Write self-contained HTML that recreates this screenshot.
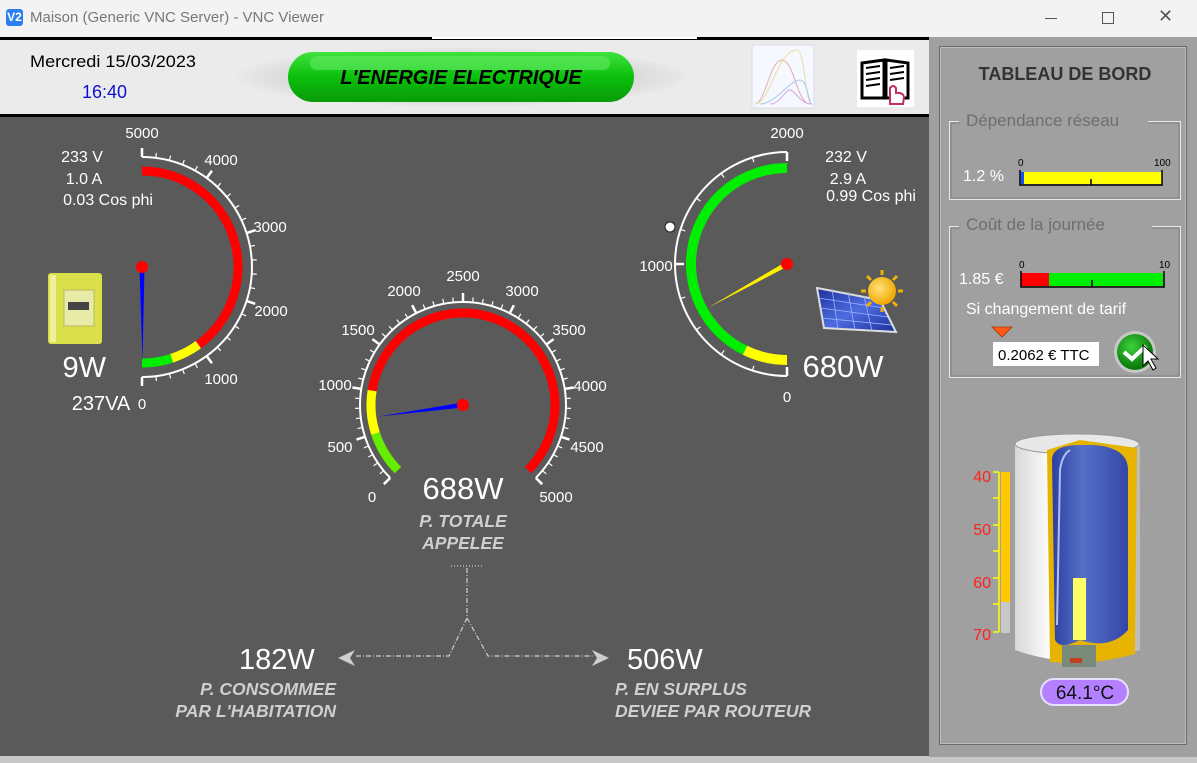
<!DOCTYPE html>
<html><head><meta charset="utf-8"><style>
html,body{margin:0;padding:0;width:1197px;height:763px;overflow:hidden;background:#f3f3f3;font-family:"Liberation Sans",sans-serif}
.a{position:absolute}
</style></head><body>
<div class="a" style="left:0;top:0;width:1197px;height:37px;background:#f3f3f3"></div>
<div class="a" style="left:6px;top:9px;width:17px;height:17px;background:#2d7ff0;border-radius:3px;color:#fff;font-size:12px;line-height:17px;text-align:center;font-weight:bold">V2</div>
<div class="a" style="left:30px;top:9px;font-size:15px;color:#777">Maison (Generic VNC Server) - VNC Viewer</div>
<div class="a" style="left:1045px;top:18px;width:12px;height:1px;background:#555"></div>
<div class="a" style="left:1102px;top:12px;width:10px;height:10px;border:1px solid #555"></div>
<div class="a" style="left:1158px;top:6px;font-size:18px;color:#555">✕</div>

<svg class="a" style="left:0;top:0" width="1197" height="763" xmlns="http://www.w3.org/2000/svg" font-family="Liberation Sans, sans-serif">
<defs>
<linearGradient id="gp" x1="0" y1="0" x2="0" y2="1"><stop offset="0" stop-color="#3ee23e"/><stop offset="0.5" stop-color="#0cc00c"/><stop offset="1" stop-color="#089a08"/></linearGradient>
<radialGradient id="gh" cx="0.5" cy="0.5" r="0.5"><stop offset="0.6" stop-color="#cfcfcf"/><stop offset="1" stop-color="#e9e9e9"/></radialGradient>
<linearGradient id="cyl" x1="0" y1="0" x2="1" y2="0"><stop offset="0" stop-color="#d8d8d8"/><stop offset="0.3" stop-color="#ffffff"/><stop offset="1" stop-color="#bcbcbc"/></linearGradient>
<linearGradient id="tank" x1="0" y1="0" x2="1" y2="0"><stop offset="0" stop-color="#2c3fa0"/><stop offset="0.4" stop-color="#5670c8"/><stop offset="1" stop-color="#3346a8"/></linearGradient>
<radialGradient id="btn" cx="0.4" cy="0.35" r="0.6"><stop offset="0" stop-color="#3ed23e"/><stop offset="1" stop-color="#0a7a0a"/></radialGradient>
<radialGradient id="sun" cx="0.4" cy="0.4" r="0.6"><stop offset="0" stop-color="#ffe27a"/><stop offset="1" stop-color="#f0a800"/></radialGradient>
<linearGradient id="pan" x1="0" y1="0" x2="1" y2="1"><stop offset="0" stop-color="#1c2f9a"/><stop offset="0.5" stop-color="#4d6ce0"/><stop offset="1" stop-color="#1c2f9a"/></linearGradient>
</defs>
<rect x="0" y="37" width="930" height="721" fill="#5a5a5a"/>
<rect x="0" y="38" width="930" height="78" fill="#ebebeb"/>
<rect x="0" y="37" width="930" height="3" fill="#000"/>
<rect x="0" y="114" width="930" height="3" fill="#000"/>
<rect x="432" y="37" width="265" height="2" fill="#fff"/>
<rect x="0" y="756" width="1197" height="7" fill="#c8c8c8"/>
<rect x="929" y="37" width="268" height="720" fill="#a0a0a0"/>
<rect x="939.5" y="46.5" width="247" height="698" fill="none" stroke="#6a6a6a"/>
<rect x="940.5" y="47.5" width="245" height="696" fill="none" stroke="#c6c6c6" stroke-width="0.8"/>

<text x="30" y="67" font-size="17" fill="#000" textLength="166" lengthAdjust="spacingAndGlyphs">Mercredi 15/03/2023</text>
<text x="82" y="98" font-size="18" fill="#1010d0">16:40</text>
<ellipse cx="462" cy="77" rx="225" ry="30" fill="url(#gh)"/>
<rect x="288" y="52" width="346" height="50" rx="25" fill="url(#gp)"/>
<rect x="310" y="56" width="300" height="14" rx="7" fill="#6ef06e" opacity="0.5"/>
<text x="461" y="84" font-size="20" font-weight="bold" font-style="italic" text-anchor="middle" fill="#000">L'ENERGIE ELECTRIQUE</text>
<rect x="752" y="45" width="62" height="63" fill="#f6f8ff" stroke="#d8dce8"/>
<path d="M755 104 C765 104 770 60 782 60 C794 60 797 104 810 104" fill="none" stroke="#e7a9a9"/>
<path d="M755 104 C770 104 777 50 797 50 C805 50 805 104 812 104" fill="none" stroke="#e8e0a0"/>
<path d="M760 104 C775 104 790 80 800 80 C808 80 808 104 812 104" fill="none" stroke="#a8c8e8"/>
<path d="M770 104 C780 104 785 90 790 90 C795 90 800 104 812 104" fill="none" stroke="#d8a8e8"/>
<rect x="857" y="50" width="57" height="57" fill="#fff"/>
<path d="M862 63 L884 60 L884 98 L862 98 Z M886 60 L908 63 L908 98 L886 98 Z" fill="#fff" stroke="#000" stroke-width="3"/>
<path d="M866 68 L880 66 M866 74 L880 72 M866 80 L880 78 M866 86 L880 84 M890 68 L904 66 M890 74 L904 72 M890 80 L904 78" stroke="#000" stroke-width="2"/>
<path d="M890 104 L890 88 Q893 84 896 88 L896 93 Q903 92 904 97 L903 104 Z" fill="#fff" stroke="#c03060" stroke-width="2"/>

<g id="g1"></g><g id="g2"></g><g id="g3"></g>

<g fill="#fff" font-size="15" text-anchor="middle">
<text x="142" y="138">5000</text><text x="221" y="165">4000</text><text x="270" y="232">3000</text><text x="271" y="316">2000</text><text x="221" y="384">1000</text><text x="142" y="409">0</text>
<text x="82" y="162" font-size="16">233 V</text><text x="84" y="184" font-size="16">1.0 A</text><text x="108" y="205" font-size="16">0.03 Cos phi</text>
<text x="106" y="377" font-size="29" text-anchor="end">9W</text>
<text x="101" y="410" font-size="20">237VA</text>
</g>
<rect x="48" y="273" width="54" height="71" rx="3" fill="#d9e04a"/>
<rect x="50" y="275" width="6" height="67" fill="#eef0a0"/>
<rect x="64" y="290" width="30" height="36" fill="#e8eaa8" stroke="#b8bb60"/>
<rect x="68" y="302" width="21" height="8" fill="#444"/>

<g fill="#fff" font-size="15" text-anchor="middle">
<text x="372" y="502">0</text><text x="340" y="452">500</text><text x="335" y="390">1000</text><text x="358" y="335">1500</text><text x="404" y="296">2000</text><text x="463" y="281">2500</text><text x="522" y="296">3000</text><text x="569" y="335">3500</text><text x="590" y="391">4000</text><text x="587" y="452">4500</text><text x="556" y="502">5000</text>
<text x="463" y="499" font-size="31">688W</text>
</g>
<g fill="#cfcfcf" font-size="17.5" font-weight="bold" font-style="italic" text-anchor="middle">
<text x="463" y="527">P. TOTALE</text><text x="463" y="549">APPELEE</text>
</g>

<g fill="#fff" font-size="15" text-anchor="middle">
<text x="787" y="138">2000</text><text x="656" y="271">1000</text><text x="787" y="402">0</text>
<text x="846" y="162" font-size="16">232 V</text><text x="848" y="184" font-size="16">2.9 A</text><text x="871" y="201" font-size="16">0.99 Cos phi</text>
<text x="843" y="377" font-size="31">680W</text>
</g>
<circle cx="670" cy="227" r="5" fill="#fff" stroke="#222"/>
<polygon points="817,288 880,300 896,332 824,328" fill="url(#pan)" stroke="#ddd" stroke-width="2"/>
<path d="M818 298 L884 308 M820 308 L888 317 M821 318 L892 325 M832 289 L838 329 M848 292 L855 330 M864 296 L872 331" stroke="#9fb4ff" stroke-width="0.8"/>
<circle cx="882" cy="291" r="14" fill="url(#sun)"/>
<g stroke="#f0b000" stroke-width="3"><path d="M882 270v5M882 307v5M861 291h5M898 291h5M867 276l4 4M893 302l4 4M897 276l-4 4M867 306l4-4"/></g>

<g stroke="#cfcfcf" stroke-width="1.2" fill="none" stroke-dasharray="5,2,1,2">
<path d="M451 566 H484" stroke-dasharray="1,2"/>
<path d="M467 568 V618 L449 656 H355"/>
<path d="M467 618 L488 656 H594"/>
</g>
<polygon points="338,658 355,650 350,658 355,666" fill="#cfcfcf"/>
<polygon points="609,658 592,650 597,658 592,666" fill="#cfcfcf"/>
<g fill="#fff" font-size="29"><text x="239" y="669">182W</text><text x="627" y="669">506W</text></g>
<g fill="#cfcfcf" font-size="17.5" font-weight="bold" font-style="italic">
<text x="336" y="695" text-anchor="end">P. CONSOMMEE</text><text x="336" y="717" text-anchor="end">PAR L'HABITATION</text>
<text x="615" y="695">P. EN SURPLUS</text><text x="615" y="717">DEVIEE PAR ROUTEUR</text>
</g>

<text x="1065" y="80" font-size="18" font-weight="bold" fill="#333" text-anchor="middle">TABLEAU DE BORD</text>
<path d="M959 121.5 H949.5 V199.5 H1180.5 V121.5 H1148" fill="none" stroke="#e8e8e8"/>
<path d="M960 123 H951 V198 H1179 V123 H1148" fill="none" stroke="#7a7a7a" stroke-width="0.8"/>
<text x="966" y="126" font-size="17" fill="#6e6e6e">Dépendance réseau</text>
<text x="963" y="181" font-size="16" fill="#fff">1.2 %</text>
<text x="1018" y="166" font-size="10" fill="#000">0</text><text x="1154" y="166" font-size="10" fill="#000">100</text>
<rect x="1021" y="172" width="141" height="12" fill="#ffff00"/>
<rect x="1021" y="172" width="3" height="12" fill="#1050ff"/>
<path d="M1020 170 V185 H1162 V170 M1091 185 V179" fill="none" stroke="#000" stroke-width="1.5"/>

<path d="M959 226.5 H949.5 V377.5 H1180.5 V226.5 H1152" fill="none" stroke="#e8e8e8"/>
<path d="M960 228 H951 V376 H1179 V228 H1152" fill="none" stroke="#7a7a7a" stroke-width="0.8"/>
<text x="966" y="230" font-size="17" fill="#6e6e6e">Coût de la journée</text>
<text x="959" y="284" font-size="16" fill="#fff">1.85 €</text>
<text x="1019" y="268" font-size="10" fill="#000">0</text><text x="1159" y="268" font-size="10" fill="#000">10</text>
<rect x="1021" y="273" width="28" height="13" fill="#ff0000"/>
<rect x="1049" y="273" width="114" height="13" fill="#00ee00"/>
<path d="M1021 271 V287 H1164 V271 M1092 287 V280" fill="none" stroke="#000" stroke-width="1.5"/>
<text x="966" y="314" font-size="16" fill="#fff">Si changement de tarif</text>
<polygon points="992,327 1012,327 1002,337" fill="#ff5a1a" stroke="#aa3300" stroke-width="0.8"/>
<rect x="993" y="342" width="106" height="24" fill="#fff"/>
<text x="998" y="360" font-size="15" fill="#000">0.2062 € TTC</text>
<circle cx="1135" cy="352" r="21" fill="#c8c8c8"/>
<circle cx="1135" cy="352" r="18" fill="url(#btn)"/>
<path d="M1124 352 L1132 359 L1146 346" fill="none" stroke="#fff" stroke-width="4"/>
<path d="M1143 345 L1143 366 L1148 361 L1153 370 L1156 368 L1151 359 L1158 359 Z" fill="#fff" stroke="#000"/>

<path d="M1015 445 Q1077 425 1140 445 V650 Q1077 672 1015 650 Z" fill="url(#cyl)"/>
<ellipse cx="1077" cy="444" rx="62" ry="10" fill="#e8e8e8" stroke="#999"/>
<path d="M1047 450 L1080 440 L1137 448 L1135 654 Q1090 666 1050 662 Z" fill="#e6b400"/>
<path d="M1052 460 Q1052 445 1080 445 L1095 445 Q1128 448 1128 470 L1128 630 Q1110 650 1080 640 Q1060 650 1055 640 Z" fill="url(#tank)"/>
<path d="M1060 470 Q1062 455 1070 450 M1060 470 L1057 625" stroke="#b0c0f0" stroke-width="2" fill="none"/>
<rect x="1073" y="578" width="13" height="62" fill="#ffff66"/>
<rect x="1062" y="645" width="34" height="22" fill="#7a8a7a"/>
<rect x="1070" y="658" width="12" height="5" fill="#c04020"/>
<rect x="1001" y="472" width="9" height="130" fill="#ffc800"/>
<rect x="1001" y="602" width="9" height="31" fill="#c8c8c8"/>
<path d="M999 472 V632 M993 472 H999 M993 498 H999 M993 525 H999 M993 551 H999 M993 578 H999 M993 604 H999 M993 632 H999" stroke="#ffff00" stroke-width="1.5" fill="none"/>
<g fill="#ff2020" font-size="16" text-anchor="end"><text x="991" y="482">40</text><text x="991" y="535">50</text><text x="991" y="588">60</text><text x="991" y="640">70</text></g>
<rect x="1041" y="679" width="87" height="26" rx="13" fill="#b480ff" stroke="#e8e0f8" stroke-width="2"/>
<text x="1085" y="699" font-size="19" fill="#111" text-anchor="middle">64.1°C</text>
</svg>
<script>
var NS="http://www.w3.org/2000/svg";
function pt(cx,cy,r,d){var a=d*Math.PI/180;return [cx+r*Math.sin(a),cy-r*Math.cos(a)];}
function el(g,t,at){var e=document.createElementNS(NS,t);for(var k in at)e.setAttribute(k,at[k]);g.appendChild(e);return e;}
function arc(g,cx,cy,r,a,b,col,w){var p=pt(cx,cy,r,a),q=pt(cx,cy,r,b);var sw=b>a?1:0,lg=Math.abs(b-a)>180?1:0;
el(g,"path",{d:"M"+p[0]+" "+p[1]+" A"+r+" "+r+" 0 "+lg+" "+sw+" "+q[0]+" "+q[1],fill:"none",stroke:col,"stroke-width":w});}
function ticks(g,cx,cy,r,a,b,nMaj,nMin,dir){arc(g,cx,cy,r,a,b,"#fff",2);var n=nMaj*nMin;for(var i=0;i<=n;i++){var d=a+(b-a)*i/n;var maj=i%nMin==0;var p=pt(cx,cy,r,d),q=pt(cx,cy,r+dir*(maj?9:5),d);
el(g,"line",{x1:p[0],y1:p[1],x2:q[0],y2:q[1],stroke:"#fff","stroke-width":maj?2.5:1.2});}}
function needle(g,cx,cy,len,d,col,w){var t=pt(cx,cy,len,d),l=pt(cx,cy,w,d-90),r=pt(cx,cy,w,d+90);
el(g,"polygon",{points:l.join(",")+" "+t.join(",")+" "+r.join(","),fill:col});el(g,"circle",{cx:cx,cy:cy,r:6,fill:"#ff0000"});}
var g1=document.getElementById("g1"),g2=document.getElementById("g2"),g3=document.getElementById("g3");
ticks(g1,142,267,110,180,0,5,5,1);
arc(g1,142,267,96,180,162,"#00ee00",9);arc(g1,142,267,96,162,144,"#ffff00",9);arc(g1,142,267,96,144,0,"#ff0000",9);
needle(g1,142,267,95,179.7,"#0000ff",2.5);
ticks(g2,463,405,103,-135,135,10,5,1);
arc(g2,463,405,92,-135,-108,"#66ee00",9);arc(g2,463,405,92,-108,-81,"#ffff00",9);arc(g2,463,405,92,-81,135,"#ff0000",9);
needle(g2,463,405,85,-97.8,"#0000ff",2.5);
ticks(g3,787,264,112,180,360,2,5,-1);
arc(g3,787,264,96,180,206,"#ffff00",10);arc(g3,787,264,96,206,360,"#00ee00",10);
needle(g3,787,264,90,241,"#ffee00",2.5);
</script>
</body></html>
